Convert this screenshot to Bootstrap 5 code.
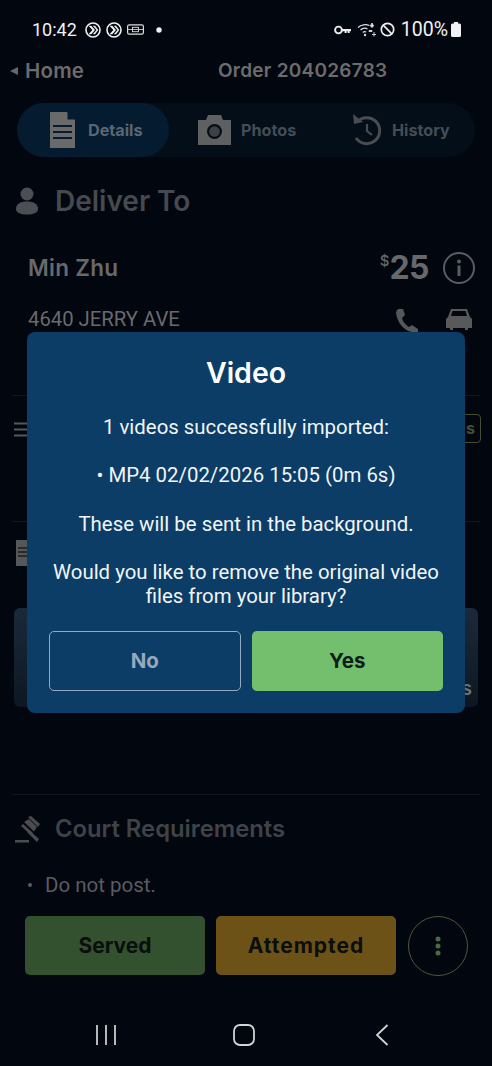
<!DOCTYPE html>
<html lang="en">
<head>
<meta charset="utf-8">
<title>Order 204026783</title>
<link href="https://cdn.jsdelivr.net/npm/bootstrap@5.3.0/dist/css/bootstrap.min.css" rel="stylesheet">
<style>
html,body{height:100%;margin:0}
body{background:#02060f;font-family:Roboto,"Liberation Sans",sans-serif;color:#6d6f72;overflow:hidden}
.phone{position:relative;width:492px;height:1066px;overflow:hidden}
.head-font{font-family:Inter,"Liberation Sans",sans-serif}
.status-row{height:53px;padding:6px 31px 0 32px;color:#f1f2f3;font-size:18px;line-height:22px}
.status-row svg{display:block;flex:none}
.pct-lbl{font-size:19.5px;margin-left:3px}
.nav-row{height:36px;padding:0 0 0 10px;font-size:19px;font-weight:600;color:#6b6c6e;line-height:24px}
.back-tri{width:0;height:0;border-style:solid;border-width:4.5px 8px 4.5px 0;border-color:transparent #66686a transparent transparent;margin-right:7px}
.home-lbl{width:60px;font-size:20.5px;letter-spacing:.2px}
.order-lbl{margin-left:133px;letter-spacing:.25px}
.tab-strip{margin:14px 17px 0;height:54px;border-radius:27px;background:#030e19}
.tab-item{height:54px;border-radius:27px;font-size:16.2px;font-weight:700;color:#444d56}
.tab-a{width:152px;background:#051c30;color:#5a6670;gap:13px;padding-left:33px}
.tab-b{width:152px;gap:10px;padding-left:29px}
.tab-c{gap:11px;padding-left:31px}
.sect-row{margin:28px 0 0 16px;height:32px;font-size:28px;font-weight:600;color:#454a50;line-height:32px;gap:17px}
.person-row{margin-top:31px;padding:0 17px 0 28px;height:40px}
.name-lbl{font-size:22.5px;font-weight:600;color:#67696c;letter-spacing:.3px}
.amt-lbl{margin-left:auto;font-size:32px;font-weight:700;color:#66686b;line-height:40px;letter-spacing:-.5px}
.amt-lbl sup{font-size:15px;font-weight:500;top:-.9em;letter-spacing:0}
.info-ring{margin-left:14px}
.addr-row{margin-top:18px;padding:0 20px 0 28px;height:28px;font-size:20.3px;line-height:26px;color:#696a6c}
.addr-row svg{flex:none}
.rule-line{height:1px;background:#12161d;margin:0 12px}
.rule-a{margin-top:61px}
.mid-row{height:125px;padding:18px 11px 0 14px}
.tag-box{margin-left:auto;width:60px;height:29px;border:1px solid #42502e;border-radius:4px;color:#41502f;font-size:16px;font-weight:700;text-align:right;padding-right:5px;line-height:26px}
.doc-row{padding:18px 0 0 16px;height:86px}
.slate-box{margin:0 14px;height:99px;border-radius:6px;background:linear-gradient(#1a2a3a,#0d1723);color:#6b7076;font-size:19px;font-weight:600;text-align:right;padding:69px 6px 0 0;line-height:24px}
.rule-b{margin-top:87px}
.court-row{margin:20px 0 0 15px;height:28px;gap:15px;font-size:23.8px;font-weight:600;color:#3f4348;line-height:28px}
.post-row{margin-top:30px;padding-left:45px;font-size:20.5px;line-height:24px;color:#5b5c5f;position:relative;height:24px}
.post-row::before{content:"";position:absolute;left:28px;top:10px;width:4px;height:4px;border-radius:50%;background:#5b5c5f}
.act-row{margin-top:19px;padding-left:25px;height:59px;gap:11px}
.act-btn{width:180px;height:59px;border:0;border-radius:5px;font-size:21px;font-weight:700;color:#0a0e0d;padding:1px 0 0;font-family:Inter,"Liberation Sans",sans-serif}
.act-green{background:#33512e}
.act-gold{background:#6c5217;letter-spacing:1px}
.act-green:hover{background:#33512e}.act-gold:hover{background:#6c5217}
.act-more{flex:none;width:60px;height:60px;margin-left:1px;border-radius:50%;border:1px solid #465a3b;background:transparent;padding:0}
.sys-row{margin-top:49px;height:24px;position:relative}
.sys-row svg{position:absolute;top:0}
.veil-wrap{position:absolute;inset:0;padding:332px 27px 0}
.dlg-box{background:#0b3d67;height:381px;border-radius:8px;color:#f2f5f8;text-align:center;padding:24px 20px 0;font-size:20.4px;line-height:24px}
.dlg-title{font-family:Inter,"Liberation Sans",sans-serif;font-size:28.5px;font-weight:600;line-height:34px;margin:0 0 25px;color:#fff}
.dlg-box p{margin:0 0 24.3px}
.dlg-btns{margin:-1px 2px 0;gap:11px}
.dlg-no,.dlg-yes{width:191.5px;height:60px;border-radius:5px;font-family:Inter,"Liberation Sans",sans-serif;font-size:20.5px;font-weight:700;padding:1px 0 0}
.dlg-no{background:transparent;border:1.5px solid #95a9c1;color:#97a8bc}
.dlg-yes{background:#74bf6e;border:0;color:#0b1f16}
.dlg-no:hover{background:transparent;color:#97a8bc;border-color:#95a9c1}
.dlg-yes:hover{background:#74bf6e;color:#0b1f16}
</style>
</head>
<body>
<div class="phone">
  <div class="status-row d-flex align-items-center justify-content-between">
    <div class="d-flex align-items-center" style="gap:5px">
      <span style="margin-right:3px">10:42</span>
      <svg width="16" height="16" viewBox="0 0 16 16"><circle cx="8" cy="8" r="7" fill="none" stroke="#f1f2f3" stroke-width="1.6"/><path d="M3.500 3.800L7.400 8l-3.900 4.200h2.800L10 8 6.300 3.800zM7.800 3.800L11.500 8l-3.700 4.200h2.200L13.300 8 10 3.800z" fill="#f1f2f3"/></svg>
      <svg width="16" height="16" viewBox="0 0 16 16"><circle cx="8" cy="8" r="7" fill="none" stroke="#f1f2f3" stroke-width="1.6"/><path d="M3.500 3.800L7.400 8l-3.900 4.200h2.800L10 8 6.300 3.800zM7.800 3.800L11.500 8l-3.700 4.200h2.200L13.300 8 10 3.800z" fill="#f1f2f3"/></svg>
      <svg width="17" height="11" viewBox="0 0 17 11"><rect x=".6" y=".8" width="15.800" height="9.400" rx="1.600" fill="none" stroke="#ddd" stroke-width="1.2"/><path d="M1 5.500h15" stroke="#ddd" stroke-width=".8"/><rect x="5.500" y="3.300" width="6" height="4.400" fill="none" stroke="#ddd" stroke-width=".9"/></svg>
      <svg width="6" height="6" viewBox="0 0 6 6" style="margin-left:7px"><circle cx="3" cy="3" r="2.700" fill="#f1f2f3"/></svg>
    </div>
    <div class="d-flex align-items-center" style="gap:3px">
      <svg width="17" height="10" viewBox="0 0 17 10" style="margin-right:3px"><circle cx="4.500" cy="5" r="3.400" fill="none" stroke="#eee" stroke-width="1.9"/><path d="M8 4h9v2.200h-1.400V8h-2V6.200h-1V8h-2V6.200H8z" fill="#eee"/></svg>
      <svg width="20" height="15" viewBox="0 0 20 15"><g fill="none" stroke="#ddd" stroke-width="1.2"><path d="M1 5.500C4 2.500 9 2 12.500 3.500"/><path d="M3.500 8c2-2 5-2.200 7-1"/><path d="M5.800 10.500c1-1 2.500-1 3.500-.4"/></g><circle cx="8" cy="13" r="1.200" fill="#ddd"/><path d="M15 1l1.600 3-1.600 1.400L13.400 4zM12 8.500h3v1h-3zM17 10v4.500M15 12.500h4" stroke="#ddd" fill="#ddd" stroke-width=".9"/></svg>
      <svg width="15" height="15" viewBox="0 0 15 15"><circle cx="7.500" cy="7.500" r="6.200" fill="none" stroke="#eee" stroke-width="1.7"/><path d="M3.200 3.200l8.600 8.600" stroke="#eee" stroke-width="1.7"/></svg>
      <span class="pct-lbl">100%</span>
      <svg width="10" height="15" viewBox="0 0 10 15"><path d="M3 0h4v1.500h1.500A1.500 1.500 0 0 1 10 3v10.500a1.500 1.500 0 0 1-1.500 1.500h-7A1.500 1.500 0 0 1 0 13.500V3a1.500 1.500 0 0 1 1.500-1.500H3z" fill="#f1f2f3"/></svg>
    </div>
  </div>

  <div class="nav-row head-font d-flex align-items-center">
    <span class="back-tri"></span><span class="home-lbl">Home</span><span class="order-lbl">Order 204026783</span>
  </div>

  <div class="tab-strip d-flex head-font">
    <div class="tab-item tab-a d-flex align-items-center">
      <svg width="25" height="36" viewBox="0 0 25 36"><path d="M0 0h17l8 8v28H0z" fill="#6a6a6a"/><path d="M17.500 0v7.500H25z" fill="#051c30"/><path d="M3 14h19M3 20h19M3 26h19" stroke="#051c30" stroke-width="2.2"/></svg>
      <span>Details</span>
    </div>
    <div class="tab-item tab-b d-flex align-items-center">
      <svg width="33" height="30" viewBox="0 0 33 30"><path d="M0 5h8l2-5h13l2 5h8v25H0z" fill="#5f6062"/><circle cx="16.500" cy="16.500" r="7.500" fill="#030e19"/><circle cx="16.500" cy="16.500" r="5.300" fill="#3d4044"/></svg>
      <span>Photos</span>
    </div>
    <div class="tab-item tab-c d-flex align-items-center">
      <svg width="29" height="32" viewBox="0 0 29 32"><path d="M5 8A13 13 0 1 1 4 24" fill="none" stroke="#4a4c4f" stroke-width="3"/><path d="M1 0l1 10 9-2z" fill="#4a4c4f"/><path d="M15 10v7l5 4" fill="none" stroke="#4a4c4f" stroke-width="2.2"/></svg>
      <span>History</span>
    </div>
  </div>

  <div class="sect-row head-font d-flex align-items-center">
    <svg width="22" height="28" viewBox="0 0 22 28"><circle cx="11" cy="7" r="6.500" fill="#4b4e52"/><path d="M0 22c0-5 4-7.500 11-7.500S22 17 22 22c0 4-5 5.500-11 5.500S0 26 0 22z" fill="#4b4e52"/></svg>
    <span>Deliver To</span>
  </div>

  <div class="person-row head-font d-flex align-items-center">
    <span class="name-lbl">Min Zhu</span>
    <span class="amt-lbl"><sup>$</sup>25</span>
    <svg class="info-ring" width="32" height="34" viewBox="0 0 32 34"><circle cx="16" cy="17" r="15" fill="none" stroke="#5a5c5f" stroke-width="2"/><circle cx="16" cy="10.500" r="2" fill="#5a5c5f"/><rect x="14.500" y="14.500" width="3" height="10.500" fill="#5a5c5f"/></svg>
  </div>

  <div class="addr-row d-flex align-items-start">
    <span>4640 JERRY AVE</span>
    <svg class="ms-auto" width="24" height="24" viewBox="0 0 24 24" style="margin-top:2px"><path d="M3 1l5 0 2 6-3 3c1 4 3 6.500 7 9l3-2 6 4v3H17C8 23 1 12 1 4z" fill="#555759"/></svg>
    <svg width="26" height="23" viewBox="0 0 26 23" style="margin-left:27px;margin-top:2px"><path d="M5 1h16l3 8 2 2v9h-4v2h-3v-2H7v2H4v-2H0v-9l2-2zM6.500 3L5 8h16l-1.500-5z" fill="#58595b" fill-rule="evenodd"/></svg>
  </div>

  <div class="rule-line rule-a"></div>
  <div class="mid-row head-font d-flex align-items-start">
    <svg width="14" height="15" viewBox="0 0 14 15" style="margin-top:8px"><path d="M0 1.500h14M0 7.500h14M0 13.500h14" stroke="#55585b" stroke-width="2.2"/></svg>
    <div class="tag-box">s</div>
  </div>
  <div class="rule-line"></div>
  <div class="doc-row">
    <svg width="12" height="26" viewBox="0 0 12 26"><rect width="12" height="26" fill="#555759"/><path d="M2 8h10M2 12h10M2 16h10" stroke="#1a1c1e" stroke-width="1.5"/></svg>
  </div>
  <div class="slate-box head-font">s</div>
  <div class="rule-line rule-b"></div>

  <div class="court-row head-font d-flex align-items-center">
    <svg width="25" height="27" viewBox="0 0 25 27"><path d="M13 1l3-1 9 8-2 3zM9 6l5-3 8 8-3 4.500zM8 8l10 9-2 2-10-9zM14 14l10 9-2 3-10-10zM0 24h14v2.500H0z" fill="#4a4c4f"/></svg>
    <span>Court Requirements</span>
  </div>
  <div class="post-row">Do not post.</div>

  <div class="act-row d-flex">
    <button type="button" class="btn act-btn act-green">Served</button>
    <button type="button" class="btn act-btn act-gold">Attempted</button>
    <button type="button" class="btn act-more d-flex align-items-center justify-content-center" aria-label="More">
      <svg width="6" height="20" viewBox="0 0 6 20"><circle cx="3" cy="3" r="2.500" fill="#4a6a43"/><circle cx="3" cy="10" r="2.500" fill="#4a6a43"/><circle cx="3" cy="17" r="2.500" fill="#4a6a43"/></svg>
    </button>
  </div>

  <div class="sys-row">
    <svg width="22" height="22" viewBox="0 0 22 22" style="left:95px"><path d="M2 1v20M11 1v20M20 1v20" stroke="#c9cacb" stroke-width="1.8"/></svg>
    <svg width="22" height="22" viewBox="0 0 22 22" style="left:233px"><rect x="1" y="1" width="20" height="20" rx="6" fill="none" stroke="#d2d3d4" stroke-width="1.8"/></svg>
    <svg width="14" height="22" viewBox="0 0 14 22" style="left:375px"><path d="M12.500 1L2 11l10.500 10" fill="none" stroke="#d2d3d4" stroke-width="1.8"/></svg>
  </div>

  <div class="veil-wrap">
    <div class="dlg-box">
      <h5 class="dlg-title">Video</h5>
      <p>1 videos successfully imported:</p>
      <p>• MP4 02/02/2026 15:05 (0m 6s)</p>
      <p>These will be sent in the background.</p>
      <p>Would you like to remove the original video files from your library?</p>
      <div class="dlg-btns d-flex">
        <button type="button" class="btn dlg-no">No</button>
        <button type="button" class="btn dlg-yes">Yes</button>
      </div>
    </div>
  </div>
</div>
<script src="https://cdn.jsdelivr.net/npm/bootstrap@5.3.0/dist/js/bootstrap.bundle.min.js"></script>
</body>
</html>
